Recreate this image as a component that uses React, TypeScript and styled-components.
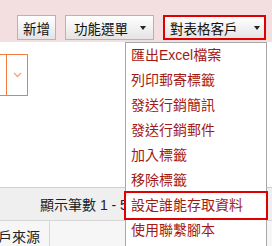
import styled, { createGlobalStyle } from "styled-components";

const GlobalStyle = createGlobalStyle`
  html, body {
    margin: 0;
    padding: 0;
    background: #ffffff;
  }
  body {
    font-family: "Liberation Sans", "Noto Sans CJK TC", sans-serif;
  }
`;

const Page = styled.div`
  position: relative;
  width: 272px;
  height: 246px;
  overflow: hidden;
  background: #fff;
`;

const Toolbar = styled.div`
  height: 42px;
  box-sizing: border-box;
  background: #f3dfe0;
  display: flex;
  align-items: flex-start;
  padding: 15px 0 0 17px;
  gap: 9px;
`;

const Button = styled.button<{ $width: number; $pad: number; $marked?: boolean }>`
  width: ${(p) => p.$width}px;
  height: 25px;
  box-sizing: border-box;
  display: flex;
  align-items: center;
  justify-content: ${(p) => (p.$pad ? "flex-start" : "center")};
  padding: 0 0 0 ${(p) => p.$pad}px;
  border: ${(p) => (p.$marked ? "2px solid #e00000" : "1px solid #b4b4b4")};
  background: linear-gradient(#ffffff, #e4e4e4);
  font-family: inherit;
  font-size: 13.5px;
  color: #111;
  cursor: pointer;
  white-space: nowrap;
`;

const Caret = styled.span<{ $space: number }>`
  display: inline-block;
  margin-left: ${(p) => p.$space}px;
  width: 0;
  height: 0;
  border-left: 3px solid transparent;
  border-right: 3px solid transparent;
  border-top: 4px solid #222;
`;

const Anchor = styled.div`
  position: relative;
`;

const Menu = styled.ul`
  position: absolute;
  top: calc(100% + 2px);
  right: -1px;
  width: 142px;
  height: 230px;
  box-sizing: border-box;
  margin: 0;
  padding: 0;
  list-style: none;
  background: #fff;
  border: 1px solid #a8a8a8;
  z-index: 2;
`;

const MenuItem = styled.li<{ $marked?: boolean }>`
  height: 25px;
  line-height: 25px;
  padding-left: 5px;
  font-size: 14px;
  color: #a31a14;
  white-space: nowrap;
  outline: ${(p) => (p.$marked ? "2px solid #e00000" : "none")};
  outline-offset: 0;
`;

const FilterRow = styled.div`
  margin-top: 12px;
  display: flex;
`;

const SelectBox = styled.div`
  margin-left: -30px;
  width: 58px;
  height: 42px;
  box-sizing: border-box;
  border: 1px solid #f47c3e;
  display: flex;
`;

const SelectField = styled.div`
  flex: 1;
  border-right: 1px solid #f47c3e;
`;

const SelectArrow = styled.div`
  width: 20px;
  display: flex;
  align-items: center;
  justify-content: center;
`;

const InfoBar = styled.div`
  margin-top: 91px;
  height: 34px;
  box-sizing: border-box;
  background: #efefef;
  border-top: 1px solid #cfcfcf;
  border-bottom: 1px solid #d6d6d6;
  display: flex;
  align-items: center;
  padding-left: 40px;
  font-size: 14px;
  color: #222;
  white-space: nowrap;
`;

const HeaderRow = styled.div`
  display: flex;
  height: 30px;
  background: #f6f6f6;
`;

const HeaderCell = styled.div<{ $width: number }>`
  width: ${(p) => p.$width}px;
  box-sizing: border-box;
  border-right: 1px solid #d8d8d8;
  display: flex;
  justify-content: flex-end;
  align-items: center;
  padding-right: 9px;
  overflow: hidden;
  font-size: 14px;
  color: #222;
  white-space: nowrap;
`;

const items = [
  "匯出Excel檔案",
  "列印郵寄標籤",
  "發送行銷簡訊",
  "發送行銷郵件",
  "加入標籤",
  "移除標籤",
  "設定誰能存取資料",
  "使用聯繫腳本",
];

export default function App() {
  return (
    <>
      <GlobalStyle />
      <Page>
        <Toolbar>
          <Button $width={39} $pad={0}>
            新增
          </Button>
          <Button $width={89} $pad={8}>
            功能選單
            <Caret $space={12} />
          </Button>
          <Anchor>
            <Button $width={103} $pad={5} $marked>
              對表格客戶
              <Caret $space={16} />
            </Button>
            <Menu>
              {items.map((label) => (
                <MenuItem key={label} $marked={label === "設定誰能存取資料"}>
                  {label}
                </MenuItem>
              ))}
            </Menu>
          </Anchor>
        </Toolbar>

        <FilterRow>
          <SelectBox>
            <SelectField />
            <SelectArrow>
              <svg width="9" height="6" viewBox="0 0 9 6">
                <path d="M1 1 L4.5 4.5 L8 1" fill="none" stroke="#f6a27a" strokeWidth="1.3" />
              </svg>
            </SelectArrow>
          </SelectBox>
        </FilterRow>

        <InfoBar>顯示筆數 1 - 50 / 總筆數 128</InfoBar>
        <HeaderRow>
          <HeaderCell $width={50}>客戶來源</HeaderCell>
          <HeaderCell $width={80} />
        </HeaderRow>
      </Page>
    </>
  );
}
